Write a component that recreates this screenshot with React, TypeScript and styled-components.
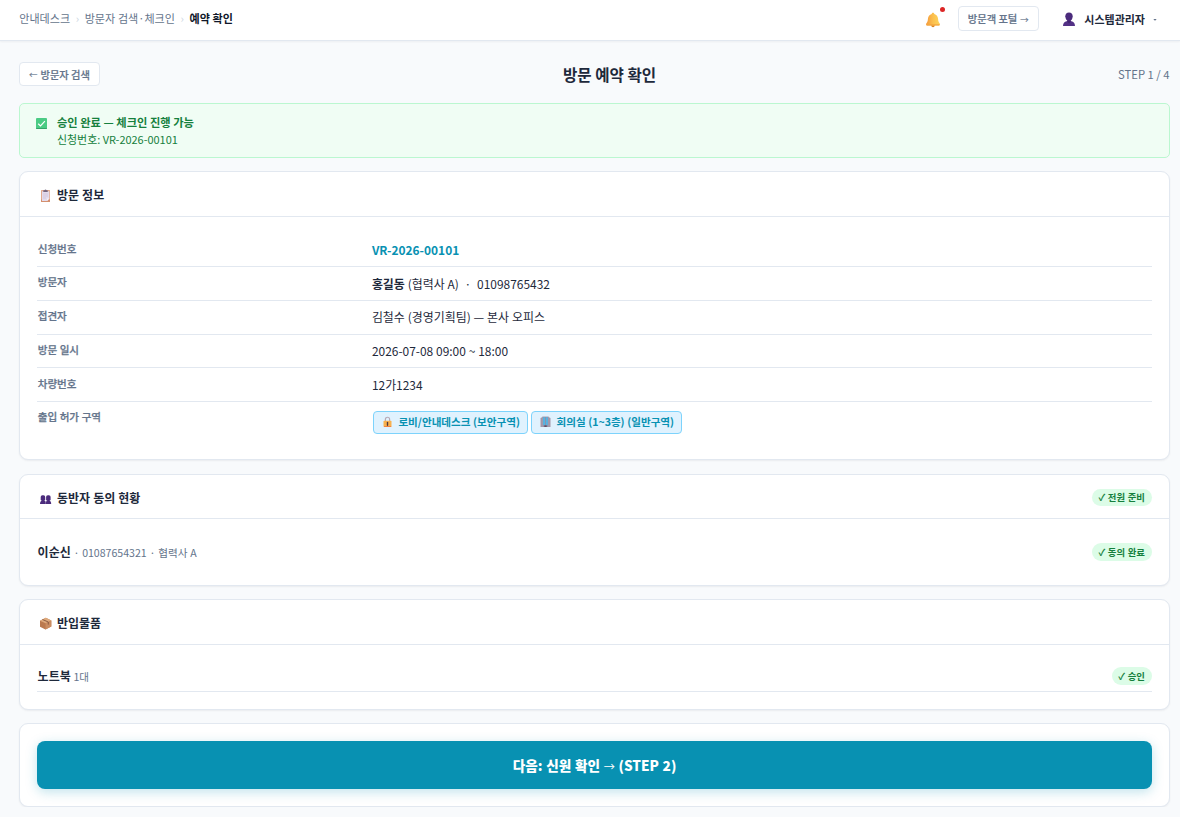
import React from "react";
import styled, { createGlobalStyle } from "styled-components";

const Global = createGlobalStyle`
  * { box-sizing: border-box; }
  body {
    margin: 0;
    background: #f8fafc;
    color: #1e293b;
    font-family: "Noto Sans CJK KR", "Noto Sans", sans-serif;
    font-size: 12px;
    line-height: 1.5;
    overflow: hidden;
  }
  button { font-family: inherit; }
  svg { display: block; flex: none; }
`;

const TopBar = styled.header`
  height: 41px;
  padding: 0 23px 3px 19.3px;
  display: flex;
  align-items: center;
  justify-content: space-between;
  background: #fff;
  border-bottom: 1px solid #e2e8f0;
  box-shadow: 0 1px 2px rgba(15, 23, 42, 0.05);
`;

const Crumbs = styled.nav`
  display: flex;
  align-items: center;
  gap: 5.6px;
  font-size: 11.05px;
  word-spacing: 0.3px;
  color: #64748b;
`;
const CrumbMark = styled.span`
  color: #cbd5e1;
`;
const CrumbNow = styled.strong`
  color: #0f172a;
  font-weight: 700;
`;

const TopActions = styled.div`
  display: flex;
  align-items: center;
`;
const Bell = styled.div`
  position: relative;
  width: 16px;
  margin: 2px 17px 0 0;
`;
const Dot = styled.span`
  position: absolute;
  top: -5px;
  right: -4px;
  width: 5px;
  height: 5px;
  border-radius: 50%;
  background: #dc2626;
`;

const SmallButton = styled.button<{ $h: number; $w: number }>`
  height: ${(p) => p.$h}px;
  width: ${(p) => p.$w}px;
  padding: 0;
  display: flex;
  align-items: center;
  justify-content: center;
  gap: 3px;
  background: #fff;
  border: 1px solid #e2e8f0;
  border-radius: 4px;
  color: #64748b;
  font-size: 10.25px;
  font-weight: 500;
  -webkit-text-stroke: 0.2px #64748b;
  white-space: nowrap;
`;
const Arrow = styled.span`
  display: inline-block;
  font-size: 0.82em;
  font-weight: 400;
`;

const User = styled.div`
  display: flex;
  align-items: center;
  margin: 2px 0 0 23px;
  font-size: 11px;
  font-weight: 700;
  color: #1e293b;
  svg { margin-right: 8.5px; }
`;
const Caret = styled.span`
  width: 4px;
  height: 2px;
  margin: 0 0 0 8px;
  background: #64748b;
  clip-path: polygon(0 0, 100% 0, 60% 100%, 40% 100%);
`;

const Page = styled.main`
  padding: 21px 10px 0 19px;
`;

const TitleRow = styled.div`
  height: 24px;
  display: flex;
  align-items: center;
  justify-content: space-between;
  margin-bottom: 17px;
`;
const Title = styled.h1`
  margin: 2px 0 0 1px;
  font-size: 15.6px;
  font-weight: 700;
  color: #1e293b;
`;
const Step = styled.span`
  margin-right: 0.5px;
  font-size: 11.25px;
  color: #64748b;
`;

const Notice = styled.section`
  height: 55px;
  margin-bottom: 13px;
  padding: 10px 16px;
  display: flex;
  gap: 10px;
  background: #f0fdf4;
  border: 1px solid #bbf7d0;
  border-radius: 5px;
  color: #15803d;
  svg { margin-top: 4px; }
`;
const NoticeTitle = styled.div`
  font-size: 11.25px;
  line-height: 17px;
  font-weight: 700;
`;
const NoticeText = styled.div`
  font-size: 10.95px;
  line-height: 17px;
`;

const Card = styled.section<{ $h: number; $gap?: number }>`
  height: ${(p) => p.$h}px;
  margin-bottom: ${(p) => p.$gap ?? 0}px;
  background: #fff;
  border: 1px solid #e2e8f0;
  border-radius: 9px;
  box-shadow: 0 1px 2px rgba(15, 23, 42, 0.06);
`;
const CardHead = styled.div<{ $h: number }>`
  height: ${(p) => p.$h}px;
  padding: 2px 17px 0 19px;
  display: flex;
  align-items: center;
  border-bottom: 1px solid #e2e8f0;
`;
const CardTitle = styled.h2`
  flex: 1;
  margin: 0 0 0 5px;
  font-size: 12px;
  font-weight: 700;
  word-spacing: 0.3px;
  color: #1e293b;
`;

const Details = styled.dl`
  margin: 0;
  padding: 16.25px 17px 0;
`;
const Row = styled.div`
  height: 33.75px;
  display: grid;
  grid-template-columns: 30% 1fr;
  align-items: center;
  border-bottom: 1px solid #e2e8f0;
  &:last-child {
    height: 40px;
    border-bottom: 0;
  }
`;
const Label = styled.dt`
  padding-left: 0.7px;
  align-self: start;
  margin-top: 7.45px;
  font-size: 10.55px;
  line-height: 16px;
  font-weight: 500;
  word-spacing: 0.2px;
  -webkit-text-stroke: 0.25px #64748b;
  color: #64748b;
`;
const Value = styled.dd`
  margin: 0.6px 0 0;
  padding-left: 0.4px;
  display: flex;
  gap: 3px;
  white-space: pre;
  font-size: 11.95px;
  word-spacing: 0.2px;
`;
const RequestNo = styled.strong`
  font-weight: 700;
  color: #0891b2;
`;

const Zone = styled.span`
  height: 23px;
  padding: 0 7px 1px 8.5px;
  margin-left: 1px;
  display: flex;
  align-items: center;
  gap: 5px;
  background: #e0f2fe;
  border: 1px solid #7dd3fc;
  border-radius: 4px;
  color: #0891b2;
  font-size: 10.57px;
  font-weight: 700;
  & + & { margin-left: 0; }
`;

const Item = styled.div<{ $top: number; $line?: boolean }>`
  height: ${(p) => (p.$line ? 31 : 32)}px;
  margin: ${(p) => p.$top}px 17px 0;
  padding-left: 0.6px;
  display: flex;
  align-items: center;
  justify-content: space-between;
  border-bottom: ${(p) => (p.$line ? "1px solid #e2e8f0" : "0")};
`;
const Muted = styled.span`
  font-size: 10.58px;
  word-spacing: 0.4px;
  color: #64748b;
`;
const Pill = styled.span`
  height: 17.5px;
  padding: 0 7px 0 6.8px;
  display: flex;
  align-items: center;
  border-radius: 9px;
  background: #dcfce7;
  color: #15803d;
  font-size: 9.4px;
  font-weight: 700;
  word-spacing: 0.5px;
  white-space: pre;
`;

const NextPanel = styled(Card)`
  padding: 17px;
`;
const NextButton = styled.button`
  display: block;
  width: 100%;
  height: 48px;
  padding: 0;
  border: 0;
  border-radius: 8px;
  background: #0891b2;
  box-shadow: 0 3px 12px rgba(8, 145, 178, 0.25);
  color: #fff;
  font-size: 13.6px;
  font-weight: 900;
  word-spacing: 0.6px;
`;

const BellIcon = () => (
  <svg width="16" height="16" viewBox="0 0 16 16">
    <defs>
      <linearGradient id="bell" x1="0" x2="1">
        <stop offset="0" stopColor="#f59a3c" />
        <stop offset="0.5" stopColor="#fbc04e" />
        <stop offset="1" stopColor="#fdd45a" />
      </linearGradient>
    </defs>
    <circle cx="8" cy="13.6" r="1.7" fill="#d98324" />
    <path d="M8 .8c.8 0 1.2.5 1.3 1.1C11.600 2.500 12.900 4.400 13.100 7c.1 2.200.6 3.300 1.500 4.300.6.7.3 2.300-.7 2.300H2.100c-1 0-1.300-1.600-.7-2.300.9-1 1.400-2.100 1.500-4.300.2-2.600 1.500-4.500 3.800-5.100C6.800 1.300 7.200.8 8 .8z" fill="url(#bell)" />
    <path d="M1.300 12.300h13.400c0 .8-.3 1.300-.8 1.300H2.100c-.5 0-.8-.5-.8-1.300z" fill="#f4a640" />
  </svg>
);

const UserIcon = () => (
  <svg width="14" height="15" viewBox="0 0 14 15">
    <path d="M1 14c0-3 1.700-4.600 4.500-5h3c2.800.4 4.500 2 4.500 5z" fill="#533186" />
    <path d="M5.300 7h3.400v3L7 11.200 5.300 10z" fill="#43256f" />
    <path d="M7 .6c2.300 0 3.700 1.400 3.700 3.700 0 2.600-1.500 4.900-3.700 4.900S3.300 6.900 3.300 4.300C3.300 2 4.700.6 7 .6z" fill="#4b2b7c" />
  </svg>
);

const CheckIcon = () => (
  <svg width="11" height="11" viewBox="0 0 11 11">
    <rect width="11" height="11" rx="1" fill="#4bcb84" />
    <path d="M0 10h11v.2a.8.8 0 0 1-.8.8H.8a.8.8 0 0 1-.8-.8z" fill="#36a269" />
    <path d="M2.200 5.700l2.300 2.200 4.400-4.700" fill="none" stroke="#fff" strokeWidth="1.200" />
  </svg>
);

const ClipboardIcon = () => (
  <svg width="13" height="13" viewBox="0 0 13 13">
    <rect x="2" y="1" width="9" height="12" rx=".5" fill="#e3a98c" />
    <path d="M2 10.500h9V13H2z" fill="#d4906f" />
    <path d="M3 2.200h7.300v7.500L8 12H3z" fill="#e3dbec" />
    <path d="M10.300 9.500H8V12z" fill="#f6f0f8" />
    <path d="M4.300 1.300h1.200C5.700.2 7.300.2 7.500 1.300h1.200v1.700H4.300z" fill="#75657e" />
    <path d="M4 5h5M4 7h5M4 9h3" stroke="#cbbfd8" strokeWidth=".7" />
  </svg>
);

const PeopleIcon = () => (
  <svg width="13" height="13" viewBox="0 0 13 13">
    <g fill="#4b2b7c">
      <path d="M1 13c0-2.300.9-3.400 2.500-3.600h1.300c1.400.2 2.200 1.200 2.200 3.600z" />
      <path d="M6.600 13c0-2.400.8-3.400 2.200-3.600h1c1.500.2 2.400 1.300 2.400 3.600z" />
      <rect x="1.700" y="4.200" width="4.500" height="5.800" rx="1.700" />
      <rect x="7.100" y="4.200" width="4.500" height="5.800" rx="1.700" />
    </g>
    <path d="M6.600 10v3" stroke="#a08cba" strokeWidth=".5" />
  </svg>
);

const BoxIcon = () => (
  <svg width="13" height="13" viewBox="0 0 13 13">
    <path d="M1 3.700L6.800.8l5.500 2.600v6L6.500 12.500 1 9.800z" fill="#bb794e" />
    <path d="M1 3.700L6.800.8l5.500 2.600-5.700 2.900z" fill="#dfaa7c" />
    <path d="M6.600 6.300l5.700-2.900v6l-5.800 3.100z" fill="#ca8c61" />
    <path d="M3.500 2.500L9.300 5v2.600" fill="none" stroke="#8b5b42" strokeWidth="1" />
  </svg>
);

const LockIcon = () => (
  <svg width="11" height="12" viewBox="0 0 11 12">
    <path d="M3.400 5.500V3.200c0-2.600 4.200-2.600 4.200 0v2.300" fill="none" stroke="#b8aab8" strokeWidth="1.200" />
    <rect x="1.500" y="4.800" width="8" height="6.200" rx=".8" fill="#f9b14e" />
    <path d="M2 10.200h7.200v.8H2z" fill="#f0783e" />
    <path d="M5.500 6.500v2.700" stroke="#51383e" strokeWidth="1.400" strokeLinecap="round" />
  </svg>
);

const BuildingIcon = () => (
  <svg width="11" height="12" viewBox="0 0 11 12">
    <path d="M.5 2L2.600 1v10H.5zM8.400 1l2.100 1v9H8.400z" fill="#a396a8" />
    <rect x="2.300" y=".6" width="6.400" height="10.400" fill="#988ca0" />
    <path d="M3.100 1.300h2v8h-2zM5.900 1.300h2v8h-2z" fill="#54b4e4" />
    <path d="M4.300 9.300h2.400V11H4.300z" fill="#5d5066" />
  </svg>
);

const rows: { label: string; value: React.ReactNode }[] = [
  { label: "신청번호", value: <RequestNo>VR-2026-00101</RequestNo> },
  { label: "방문자", value: <span><b>홍길동</b>{" (협력사 A) \u00a0·\u00a0 01098765432"}</span> },
  { label: "접견자", value: "김철수 (경영기획팀) — 본사 오피스" },
  { label: "방문 일시", value: "2026-07-08 09:00 ~ 18:00" },
  { label: "차량번호", value: "12가1234" },
  {
    label: "출입 허가 구역",
    value: (
      <>
        <Zone><LockIcon />로비/안내데스크 (보안구역)</Zone>
        <Zone><BuildingIcon />회의실 (1~3층) (일반구역)</Zone>
      </>
    ),
  },
];

export default function App() {
  return (
    <>
      <Global />
      <TopBar>
        <Crumbs>
          <span>안내데스크</span>
          <CrumbMark>›</CrumbMark>
          <span>방문자 검색·체크인</span>
          <CrumbMark>›</CrumbMark>
          <CrumbNow>예약 확인</CrumbNow>
        </Crumbs>
        <TopActions>
          <Bell><BellIcon /><Dot /></Bell>
          <SmallButton $h={25} $w={81}>방문객 포털 <Arrow>→</Arrow></SmallButton>
          <User><UserIcon />시스템관리자<Caret /></User>
        </TopActions>
      </TopBar>
      <Page>
        <TitleRow>
          <SmallButton $h={24} $w={81}><Arrow>←</Arrow> 방문자 검색</SmallButton>
          <Title>방문 예약 확인</Title>
          <Step>STEP 1 / 4</Step>
        </TitleRow>
        <Notice>
          <CheckIcon />
          <div>
            <NoticeTitle>승인 완료 — 체크인 진행 가능</NoticeTitle>
            <NoticeText>신청번호: VR-2026-00101</NoticeText>
          </div>
        </Notice>
        <Card $h={289} $gap={14}>
          <CardHead $h={45}><ClipboardIcon /><CardTitle>방문 정보</CardTitle></CardHead>
          <Details>
            {rows.map((r) => (
              <Row key={r.label}>
                <Label>{r.label}</Label>
                <Value>{r.value}</Value>
              </Row>
            ))}
          </Details>
        </Card>
        <Card $h={112} $gap={13}>
          <CardHead $h={44}>
            <PeopleIcon />
            <CardTitle>동반자 동의 현황</CardTitle>
            <Pill>✓ 전원 준비</Pill>
          </CardHead>
          <Item $top={17}>
            <span><b>이순신</b> <Muted>· 01087654321 · 협력사 A</Muted></span>
            <Pill>✓ 동의 완료</Pill>
          </Item>
        </Card>
        <Card $h={111} $gap={13}>
          <CardHead $h={45}><BoxIcon /><CardTitle>반입물품</CardTitle></CardHead>
          <Item $top={16} $line>
            <span><b>노트북</b> <Muted>1대</Muted></span>
            <Pill>✓ 승인</Pill>
          </Item>
        </Card>
        <NextPanel $h={84}>
          <NextButton>다음: 신원 확인 <Arrow>→</Arrow> (STEP 2)</NextButton>
        </NextPanel>
      </Page>
    </>
  );
}
